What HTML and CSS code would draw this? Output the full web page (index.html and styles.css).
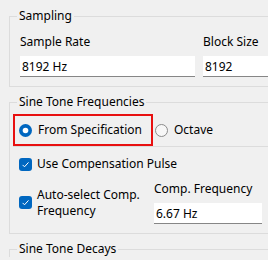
FILE: index.html
```html
<!DOCTYPE html>
<html>
<head>
<meta charset="utf-8">
<link rel="stylesheet" href="styles.css">
</head>
<body>
<div class="page">
  <fieldset class="group">
    <legend>Sampling</legend>
    <div class="fields">
      <div class="field">
        <div class="label">Sample Rate</div>
        <input class="textbox" type="text" value="8192 Hz">
      </div>
      <div class="field">
        <div class="label">Block Size</div>
        <input class="textbox" type="text" value="8192">
      </div>
    </div>
  </fieldset>

  <fieldset class="group">
    <legend>Sine Tone Frequencies</legend>
    <div class="radio-panel">
      <label class="radio highlight">
        <svg class="radio-icon" width="13" height="13" viewBox="0 0 13 13"><circle cx="6.5" cy="6.5" r="6.5" fill="#0067c0"/><circle cx="6.5" cy="6.5" r="2.8" fill="#fff"/></svg>
        <span>From Specification</span>
      </label>
      <label class="radio octave">
        <svg class="radio-icon" width="13" height="13" viewBox="0 0 13 13"><circle cx="6.5" cy="6.5" r="6" fill="#f7f7f7" stroke="#8a8a8a" stroke-width="1"/></svg>
        <span>Octave</span>
      </label>
    </div>
    <label class="check first">
      <svg class="check-icon" width="13" height="13" viewBox="0 0 13 13"><rect width="13" height="13" rx="3" fill="#0067c0"/><path d="M3.6 6.9 L5.5 8.8 L9.5 4.4" fill="none" stroke="#fff" stroke-width="1"/></svg>
      <span>Use Compensation Pulse</span>
    </label>
    <div class="bottom-row">
      <label class="check auto">
        <svg class="check-icon" width="13" height="13" viewBox="0 0 13 13"><rect width="13" height="13" rx="3" fill="#0067c0"/><path d="M3.6 6.9 L5.5 8.8 L9.5 4.4" fill="none" stroke="#fff" stroke-width="1"/></svg>
        <span>Auto-select Comp. Frequency</span>
      </label>
      <div class="field comp">
        <div class="label">Comp. Frequency</div>
        <input class="textbox" type="text" value="6.67 Hz">
      </div>
    </div>
  </fieldset>

  <fieldset class="group last">
    <legend>Sine Tone Decays</legend>
  </fieldset>
</div>
</body>
</html>
```

FILE: styles.css
```css
html, body {
  margin: 0;
  padding: 0;
  background: #f0f0f0;
  overflow: hidden;
}
body {
  font-family: "Noto Sans", "Open Sans", sans-serif;
  font-size: 12px;
  line-height: 16px;
  color: #000;
  width: 268px;
  height: 260px;
}
.page {
  padding: 8px 0 0 9px;
  width: 259px;
}
.group {
  margin: 0 0 7px 0;
  padding: 0 0 9px 10px;
  border: 1px solid #dcdcdc;
  border-right: none;
  min-width: 0;
}
.group legend {
  padding: 0 2px;
  margin-left: -3px;
  line-height: 16px;
}
.fields {
  display: grid;
  grid-template-columns: 175px 1fr;
  column-gap: 8px;
  margin-top: 10px;
}
.field {
  display: flex;
  flex-direction: column;
  gap: 6px;
  min-width: 0;
}
.textbox {
  box-sizing: border-box;
  height: 21px;
  width: 100%;
  min-width: 0;
  margin: 0;
  padding: 0 2px;
  border: none;
  border-bottom: 1px solid #868686;
  background: #fff;
  font: inherit;
  color: #000;
  outline: none;
}
.radio-panel {
  display: flex;
  align-items: center;
  margin: 4px 0 0 -7px;
  border-bottom: 1px solid #dcdcdc;
}
.radio {
  display: flex;
  align-items: center;
  gap: 6px;
  height: 32px;
  box-sizing: border-box;
}
.radio.highlight {
  border: 2px solid #e81010;
  padding: 0 9px 0 4px;
}
.radio.octave {
  margin-left: 2px;
}
.radio-icon, .check-icon {
  flex: none;
  display: block;
}
.check {
  display: flex;
  align-items: center;
  gap: 5px;
  margin-left: -1px;
}
.check.first {
  margin-top: 9px;
}
.bottom-row {
  display: flex;
  align-items: center;
  margin-top: 9px;
}
.check.auto {
  flex: 0 0 135px;
}
.field.comp {
  width: 108px;
}
.group.last {
  height: 4px;
  padding-bottom: 0;
  margin-bottom: 0;
  border-bottom: none;
}
```
